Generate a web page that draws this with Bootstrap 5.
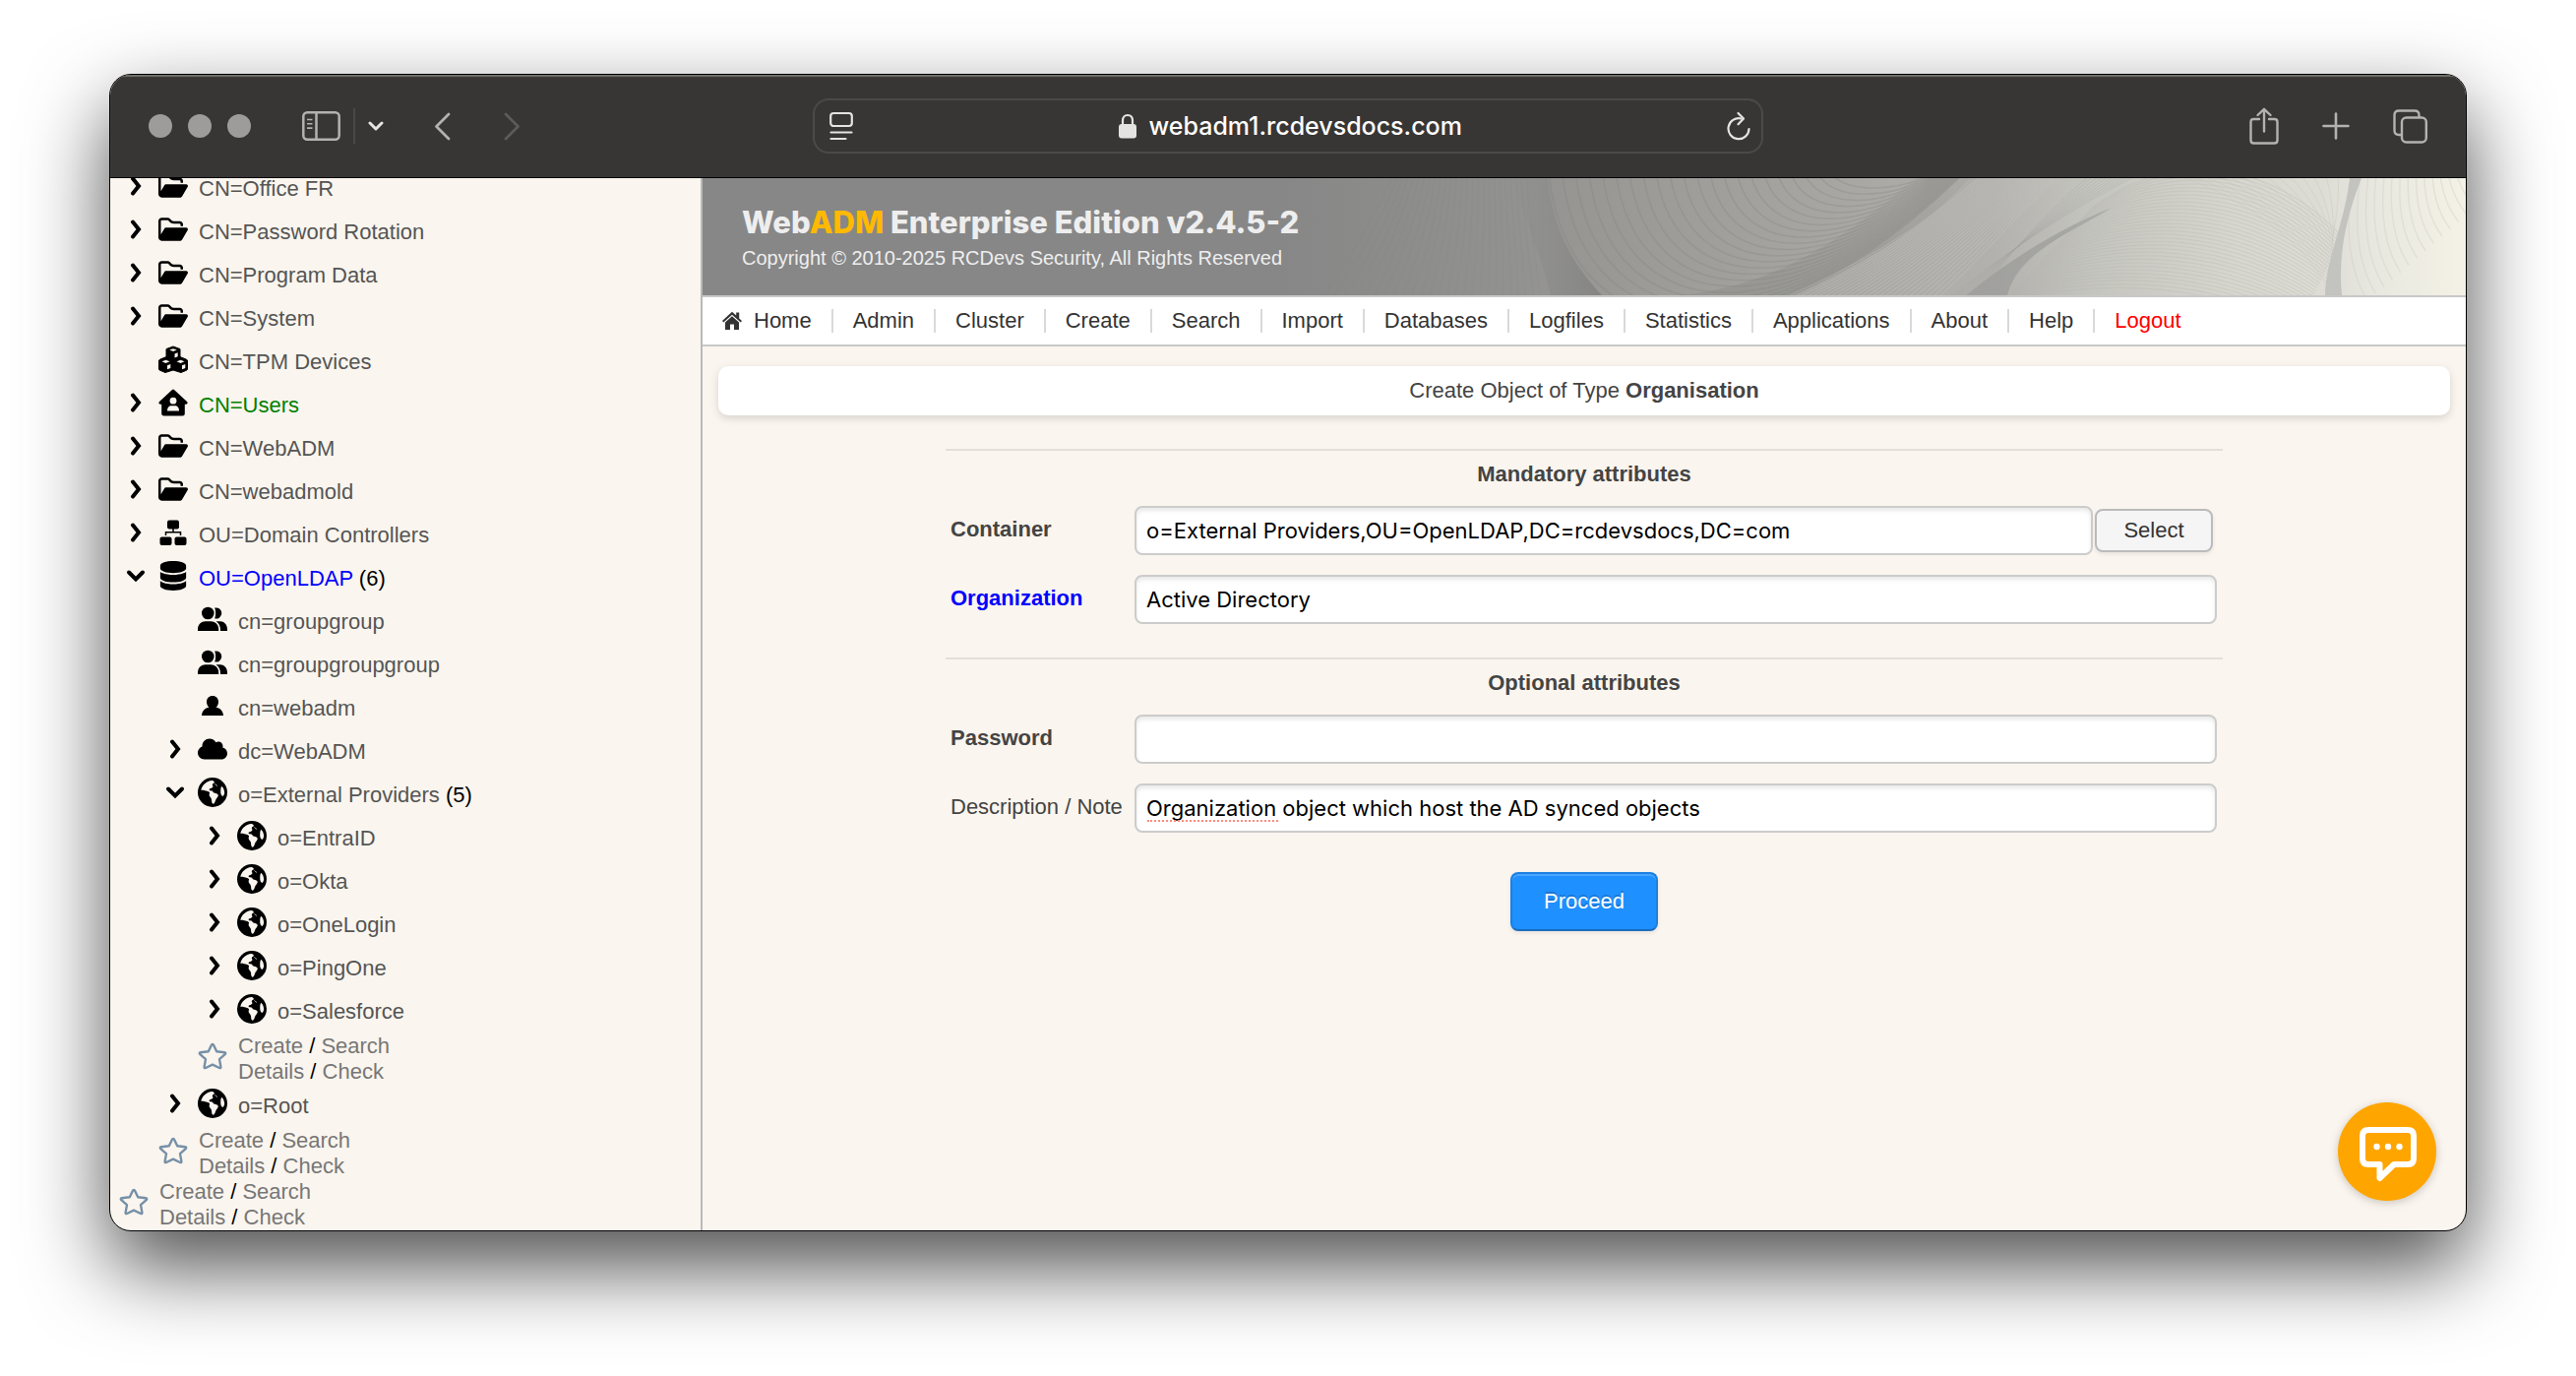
<!DOCTYPE html>
<html lang="en">
<head>
<meta charset="utf-8">
<meta name="viewport" content="width=device-width, initial-scale=1">
<title>WebADM Enterprise Edition</title>
<link href="https://cdn.jsdelivr.net/npm/bootstrap@5.3.0/dist/css/bootstrap.min.css" rel="stylesheet">
<style>
  body { font-family: "Liberation Sans", Arial, sans-serif; font-size: 22px; line-height: 26px; color: #444; background: #fff; padding: 75px 111px 147px; min-height: 100vh; }
  a { color: inherit; text-decoration: none; }
  svg { display: block; flex: none; }
  .plain-btn { background: none; border: 0; padding: 0; color: inherit; line-height: 0; }

  .browser { border: 1px solid #000; border-radius: 22px; overflow: hidden; background: #faf5ee; box-shadow: 0 36px 84px rgba(0,0,0,.7); min-height: calc(100vh - 222px); position: relative; }
  .toolbar { height: 105px; background: #383634; border-bottom: 1px solid #000; color: #b4b2b0; padding: 0 39px; box-shadow: inset 0 2px 1px #72716c; }
  .side-l, .side-r { flex: 1 1 0; }
  .light { width: 24px; height: 24px; border-radius: 50%; background: #9d9c9a; }
  .tb-rule { width: 2px; height: 36px; background: #4b4947; margin: 0 13px; }
  .addr { flex: 0 1 966px; height: 56px; border: 2px solid #4c4a48; border-radius: 16px; padding: 0 11px 0 15px; color: #e4e3e2; }
  .addr-in { width: 318px; background: none; border: 0; padding: 0; color: #fff; font: 500 25px/32px Inter, sans-serif; }
  .addr-lock { gap: 13px; }
  .tool-sidebar { margin-left: 52px; }
  .tool-back, .tool-fwd { margin-left: 51px; }
  .tool-fwd { margin-left: 54px; }
  .side-r { gap: 44px; }

  .sidebar { width: 602px; flex: none; border-right: 2px solid #b9b9bb; overflow: hidden; }
  .tree { margin: -12px 0 0; padding: 0 0 0 9px; color: #000; }
  .tree li { height: 44px; }
  .tree a { color: #555; }
  .tree .star-row { height: 52px; }
  .tree .star-row a { color: #777; }
  .tree .lv1 { padding-left: 40px; }
  .tree .lv2 { padding-left: 80px; }
  .tree .user-home { color: green; }
  .tree .active-ou { color: #00f; }
  .twist { width: 34px; height: 26px; margin: 0 6px 4px 0; display: flex; align-items: center; justify-content: center; }
  .node-ico { width: 30px; height: 30px; margin: 0 10px 4px 0; }
  .tree .node-text { padding: 2px 0 0 1px; }

  .banner { height: 119px; position: relative; background: #878787; color: #eee; padding: 27px 40px 0; overflow: hidden; }
  .banner h1 { font: 800 31px/36px Inter, sans-serif; margin: 0 0 4px; color: #eee; position: relative; }
  .banner h1 span { color: #ffb900; }
  .banner p { font-size: 20px; line-height: 28px; margin: 0; position: relative; }
  .waves { position: absolute; right: 0; top: 0; }
  .menu { border-top: 2px solid #c8c8c8; border-bottom: 2px solid #c8c8c8; background: #fff; height: 52px; }
  .menu a { padding: 0 20px; color: #333; height: 24px; line-height: 24px; border-right: 2px solid #d9d9d9; display: flex; align-items: center; gap: 12px; }
  .menu a.out { color: #f00; border: 0; }

  .page-title { background: #fff; border-radius: 10px; height: 50px; box-shadow: 0 3px 8px rgba(0,0,0,.14); margin: 20px 16px 0; font-size: 22px; line-height: 50px; color: #444; text-align: center; font-weight: 400; }
  .obj-form { width: 1298px; max-width: 100%; }
  .obj-form hr { border: 0; height: 2px; background: #e3dfda; opacity: 1; margin: 34px 0 0; }
  .obj-form legend { float: none; font-size: 22px; line-height: 48px; font-weight: 700; text-align: center; margin: 0 0 8px; padding: 0; }
  .obj-rows { gap: 20px; padding: 0 6px 0 5px; }
  .obj-row label { width: 187px; flex: none; font-weight: 700; margin-bottom: 2px; }
  .obj-row .req { color: #00f; }
  .obj-row .opt { font-weight: 400; }
  .obj-row .form-control { height: 50px; min-width: 0; border: 2px solid #ccc; border-radius: 8px; padding: 0 10px; color: #000; font: 400 22px/26px Inter, sans-serif; box-shadow: inset 0 3px 4px rgba(0,0,0,.09); background: #fff; }
  .pick { width: 120px; height: 44px; margin: 0 4px 0 2px; border: 2px solid #bbb; border-radius: 8px; background: #f5f5f5; color: #333; font-size: 22px; line-height: 26px; padding: 0; flex: none; box-shadow: 0 2px 4px rgba(0,0,0,.08); }
  .go { width: 150px; height: 60px; margin-top: 40px; border: 2px solid #1c80e3; border-bottom-color: #1b6dc0; border-radius: 8px; background: #1e90ff; color: #fff; font-size: 22px; line-height: 26px; padding: 0; box-shadow: inset 0 2px 0 #4ba6ff, 0 2px 4px rgba(0,0,0,.08); text-shadow: 0 -2px 0 rgba(0,0,0,.2); }
  .misspelt { position: absolute; left: 13px; bottom: 11px; width: 133px; border-bottom: 2px dotted #ff8a80; }
  .chat { position: absolute; right: 30px; bottom: 30px; width: 100px; height: 100px; border-radius: 50%; background: #ffa500; box-shadow: 0 2px 10px rgba(0,0,0,.2); }
</style>
<script src="https://cdn.jsdelivr.net/npm/bootstrap@5.3.0/dist/js/bootstrap.bundle.min.js"></script>
</head>
<body>
<svg width="0" height="0" class="position-absolute" aria-hidden="true">
  <symbol id="i-right" viewBox="0 0 20 20"><path d="M7 2.5l6 7.5-6 7.500" fill="none" stroke="#000" stroke-width="4" stroke-linecap="round" stroke-linejoin="miter"/></symbol>
  <symbol id="i-down" viewBox="0 0 20 20"><path d="M3 6.500l7 7 7-7" fill="none" stroke="#000" stroke-width="4" stroke-linecap="round"/></symbol>
  <symbol id="i-folder" viewBox="0 0 576 512"><path d="M384 480h48c11.400 0 21.900-6 27.600-15.900l112-192c5.800-9.900 5.800-22.100 .1-32.100S555.500 224 544 224H144c-11.400 0-21.900 6-27.600 15.900L48 357.100V96c0-8.800 7.200-16 16-16H181.500c4.200 0 8.300 1.700 11.300 4.700l26.500 26.500c21 21 49.500 32.800 79.200 32.800H416c8.800 0 16 7.200 16 16v32h48V160c0-35.300-28.700-64-64-64H298.500c-17 0-33.300-6.700-45.300-18.700L226.700 50.700c-12-12-28.300-18.700-45.300-18.700H64C28.700 32 0 60.700 0 96V416c0 35.300 28.700 64 64 64H384z"/></symbol>
  <symbol id="i-cubes" viewBox="0 0 30 30"><path d="M15 2l7 2.600v8l6 2.400q2 .8 2 2.500v6.500q0 1.500-1.500 2.200L23 28.500 15 26l-8 2.500-5.500-2.300Q0 25.500 0 24v-6.500Q0 15.800 2 15l6-2.400v-8z" stroke="#000" stroke-linejoin="round"/><g fill="#faf5ee"><path d="M11.200 5.600L15 4.300l3.800 1.300L15 7z"/><path d="M16.500 9.500l3.200-1.200v4l-3.200 1.300z"/><path d="M3.500 17.300l4-1.500 4 1.500-4 1.600z"/><path d="M9 21.200l3.300-1.300v4L9 25.300z"/><path d="M18.500 17.300l4-1.500 4 1.500-4 1.600z"/><path d="M24 21.200l3.300-1.300v4L24 25.300z"/></g></symbol>
  <symbol id="i-house" viewBox="0 0 30 30"><path d="M15 1.600a1.500 1.500 0 0 1 1 .4l13 12c1.200 1.200.6 2.800-1 2.800h-1.200V26a2.500 2.500 0 0 1-2.500 2.500H5.700A2.500 2.500 0 0 1 3.200 26v-9.200H2c-1.600 0-2.200-1.600-1-2.800L14 2a1.500 1.500 0 0 1 1-.4z"/><circle cx="15" cy="13.200" r="3.400" fill="#faf5ee"/><path d="M9 23.500c0-3.600 2-5.200 4-5.200h4c2 0 4 1.600 4 5.200z" fill="#faf5ee"/></symbol>
  <symbol id="i-map" viewBox="0 0 30 30"><rect x="9" y="2.500" width="12" height="9" rx="2"/><rect x="1.500" y="19.500" width="12" height="8.500" rx="2"/><rect x="16.500" y="19.500" width="12" height="8.500" rx="2"/><path d="M15 11v3.500M7.500 18v-3.200h15V18" fill="none" stroke="#000" stroke-width="1.500"/></symbol>
  <symbol id="i-db" viewBox="0 0 448 512"><path d="M448 80v48c0 44.200-100.300 80-224 80S0 172.200 0 128V80C0 35.800 100.300 0 224 0S448 35.800 448 80zM393.200 214.700c20.800-7.400 39.900-16.900 54.800-28.600V288c0 44.200-100.300 80-224 80S0 332.200 0 288V186.100c14.900 11.800 34 21.200 54.800 28.600C99.700 230.700 159.500 240 224 240s124.300-9.300 169.200-25.300zM0 346.100c14.900 11.800 34 21.200 54.800 28.600C99.700 390.700 159.500 400 224 400s124.300-9.300 169.200-25.300c20.800-7.400 39.900-16.900 54.800-28.600V432c0 44.200-100.300 80-224 80S0 476.200 0 432V346.100z"/></symbol>
  <symbol id="i-group" viewBox="0 0 30 30"><circle cx="10.300" cy="9" r="6.300"/><path d="M0 27v-1.500C0 20 4 17.300 7.500 17.300h6c3.500 0 7.700 2.700 7.700 8.200V27z"/><path d="M17.200 3.600a5.600 5.600 0 1 1 0 10.800c1.300-3.500 1.300-7.300 0-10.800z"/><path d="M18.500 17.300H23c3.500 0 7 3 7 8.200V27h-7c.3-4-1.300-7.800-4.500-9.700z"/></symbol>
  <symbol id="i-user" viewBox="0 0 30 30"><path d="M15 5c3.600 0 6 2.600 6 6 0 2.400-1 4.500-2.500 5.700 4 .6 7.300 3.300 7.500 8.300H4c.2-5 3.500-7.700 7.500-8.300C10 15.500 9 13.400 9 11c0-3.400 2.400-6 6-6z"/></symbol>
  <symbol id="i-cloud" viewBox="0 0 640 512"><path d="M0 336c0 79.500 64.500 144 144 144H512c70.700 0 128-57.300 128-128c0-61.900-44-113.600-102.400-125.400c4.100-10.700 6.400-22.400 6.400-34.600c0-53-43-96-96-96c-19.700 0-38.100 6-53.300 16.200C367 64.200 315.300 32 256 32C167.600 32 96 103.600 96 192c0 2.700 .1 5.400 .2 8.100C40.200 219.800 0 273.200 0 336z"/></symbol>
  <symbol id="i-globe" viewBox="0 0 30 30"><circle cx="15" cy="15" r="15"/><g fill="#faf5ee"><path d="M3.300 12.800C4.300 7.600 8.800 3.400 14.500 2.900c1.500.4 2.600 1.200 2.300 2.200-.4 1-1.900 1.200-2 2.300.1.900 1 1.200.6 2.200-.6 1.300-2.600 1-3.600 2.200-.7.900.4 1.700 1.500 1.600 1.400-.2 1.800.7 2.500 1.700.7.700 2.200.6 3.700 1.300 1.300.6 1.600 1.700.9 2.900-1 1.700-1.900 2.500-2.500 4.100-.5 1.600-1.200 3.300-2.500 3.300-1.100-.5-1.200-2.200-1.300-3.700-.1-1.700-.8-2.600-1.700-3.600-1-1.200-.9-2.100-.4-3.400.3-1-.7-1.600-1.900-2-2.300-.7-4.600-1.600-7.200-1.200z"/><path d="M24.200 8.700c1.800 1.300 2.900 4 2.900 6.600-.1 1.700-.7 3.100-1.600 3.600-1.400-.4-2.100-1.900-2.200-3.700-.1-1.900-.2-4.600.9-6.500z"/></g><path d="M17.500 6.500c1.200.5 1 1.500 2.300 1.900" stroke="#faf5ee" stroke-width=".8" fill="none"/></symbol>
  <symbol id="i-star" viewBox="0 0 30 30"><path d="M15 3q.8 0 1.200.9l3 6.400 7.900.9q1.900.4.6 1.900l-5.700 5 1.400 7.800q.2 1.700-1.400 1.100L15 23.600 8 27q-1.600.6-1.400-1.100L8 18.100l-5.700-5q-1.300-1.500.6-1.900l7.900-.9 3-6.400Q14.200 3 15 3z" fill="none" stroke="#7690a8" stroke-width="2.400" stroke-linejoin="round"/></symbol>
</svg>

<div class="browser d-flex flex-column">
  <header class="toolbar d-flex align-items-center">
    <div class="side-l d-flex align-items-center">
      <div class="d-flex gap-3"><span class="light"></span><span class="light"></span><span class="light"></span></div>
      <button class="plain-btn tool-sidebar" aria-label="Sidebar"><svg width="39" height="30" fill="none" stroke="currentColor" stroke-width="2.500"><rect x="1.300" y="1.300" width="36.400" height="27.400" rx="4"/><path d="M14.500 1v28"/><path d="M5 8.500h5.500M5 12.800h5.500M5 17.100h5.500" stroke-width="1.600"/></svg></button>
      <span class="tb-rule"></span>
      <button class="plain-btn" aria-label="Tab groups"><svg width="16" height="12" fill="none" stroke="#e6e5e4" stroke-width="3" stroke-linecap="round" stroke-linejoin="round"><path d="M2 3l6 6 6-6"/></svg></button>
      <button class="plain-btn tool-back" aria-label="Back"><svg width="17" height="29" fill="none" stroke="currentColor" stroke-width="2.800" stroke-linecap="round" stroke-linejoin="round"><path d="M15 2L2.500 14.500 15 27"/></svg></button>
      <button class="plain-btn tool-fwd" aria-label="Forward"><svg width="17" height="29" fill="none" stroke="#5d5b59" stroke-width="2.800" stroke-linecap="round" stroke-linejoin="round"><path d="M2 2l12.500 12.500L2 27"/></svg></button>
    </div>
    <div class="addr d-flex align-items-center justify-content-between">
      <button class="plain-btn" aria-label="Page menu"><svg width="24" height="30" fill="none" stroke="currentColor" stroke-width="2.200" stroke-linecap="round"><rect x="1.200" y="2" width="21.600" height="13" rx="3"/><path d="M1.500 21.500h21M1.500 28h15"/></svg></button>
      <div class="addr-lock d-flex align-items-center">
        <svg width="18" height="26"><path d="M4 12V7.500C4 4 6 2 9 2s5 2 5 5.500V12" fill="none" stroke="currentColor" stroke-width="2.200"/><rect y="11" width="18" height="14.500" rx="3" fill="currentColor"/></svg>
        <input class="addr-in" type="text" value="webadm1.rcdevsdocs.com" aria-label="Address">
      </div>
      <button class="plain-btn" aria-label="Reload"><svg width="24" height="30" fill="none" stroke="currentColor" stroke-width="2.200" stroke-linecap="round" stroke-linejoin="round"><path d="M14.500 7.500A10.500 10.500 0 1 0 22.500 18"/><path d="M11.500 2l5.500 5.500-5.500 5.800"/></svg></button>
    </div>
    <div class="side-r d-flex align-items-center justify-content-end">
      <button class="plain-btn" aria-label="Share"><svg width="30" height="38" fill="none" stroke="currentColor" stroke-width="2.400" stroke-linecap="round" stroke-linejoin="round"><path d="M10 12H4.500Q1.500 12 1.500 15v18.500q0 3 3 3h21q3 0 3-3V15q0-3-3-3H20M15 24.500V2M8.500 8L15 1.800 21.500 8"/></svg></button>
      <button class="plain-btn" aria-label="New tab"><svg width="28" height="28" stroke="currentColor" stroke-width="2.600" stroke-linecap="round"><path d="M14 1.500v25M1.500 14h25"/></svg></button>
      <button class="plain-btn" aria-label="Tabs"><svg width="35" height="35" fill="none" stroke="currentColor" stroke-width="2.400"><rect x="9" y="8.500" width="24.800" height="25" rx="4.500"/><path d="M8.500 26H6q-4.500 0-4.500-4.500V6Q1.500 1.500 6 1.500h16Q26.500 1.500 26.500 6v2"/></svg></button>
    </div>
  </header>

  <div class="d-flex flex-grow-1">
    <nav class="sidebar" aria-label="Directory tree">
      <ul class="tree list-unstyled">
        <li class="d-flex align-items-center"><button class="plain-btn twist" aria-label="Expand"><svg width="20" height="20"><use href="#i-right"/></svg></button><svg class="node-ico"><use href="#i-folder"/></svg><a class="node-text" href="#">CN=Office FR</a></li>
        <li class="d-flex align-items-center"><button class="plain-btn twist" aria-label="Expand"><svg width="20" height="20"><use href="#i-right"/></svg></button><svg class="node-ico"><use href="#i-folder"/></svg><a class="node-text" href="#">CN=Password Rotation</a></li>
        <li class="d-flex align-items-center"><button class="plain-btn twist" aria-label="Expand"><svg width="20" height="20"><use href="#i-right"/></svg></button><svg class="node-ico"><use href="#i-folder"/></svg><a class="node-text" href="#">CN=Program Data</a></li>
        <li class="d-flex align-items-center"><button class="plain-btn twist" aria-label="Expand"><svg width="20" height="20"><use href="#i-right"/></svg></button><svg class="node-ico"><use href="#i-folder"/></svg><a class="node-text" href="#">CN=System</a></li>
        <li class="d-flex align-items-center"><span class="twist"></span><svg class="node-ico"><use href="#i-cubes"/></svg><a class="node-text" href="#">CN=TPM Devices</a></li>
        <li class="d-flex align-items-center"><button class="plain-btn twist" aria-label="Expand"><svg width="20" height="20"><use href="#i-right"/></svg></button><svg class="node-ico"><use href="#i-house"/></svg><a class="node-text user-home" href="#">CN=Users</a></li>
        <li class="d-flex align-items-center"><button class="plain-btn twist" aria-label="Expand"><svg width="20" height="20"><use href="#i-right"/></svg></button><svg class="node-ico"><use href="#i-folder"/></svg><a class="node-text" href="#">CN=WebADM</a></li>
        <li class="d-flex align-items-center"><button class="plain-btn twist" aria-label="Expand"><svg width="20" height="20"><use href="#i-right"/></svg></button><svg class="node-ico"><use href="#i-folder"/></svg><a class="node-text" href="#">CN=webadmold</a></li>
        <li class="d-flex align-items-center"><button class="plain-btn twist" aria-label="Expand"><svg width="20" height="20"><use href="#i-right"/></svg></button><svg class="node-ico"><use href="#i-map"/></svg><a class="node-text" href="#">OU=Domain Controllers</a></li>
        <li class="d-flex align-items-center"><button class="plain-btn twist" aria-label="Collapse"><svg width="20" height="20"><use href="#i-down"/></svg></button><svg class="node-ico"><use href="#i-db"/></svg><span class="node-text"><a class="active-ou" href="#">OU=OpenLDAP</a> (6)</span></li>
        <li class="d-flex align-items-center lv1"><span class="twist"></span><svg class="node-ico"><use href="#i-group"/></svg><a class="node-text" href="#">cn=groupgroup</a></li>
        <li class="d-flex align-items-center lv1"><span class="twist"></span><svg class="node-ico"><use href="#i-group"/></svg><a class="node-text" href="#">cn=groupgroupgroup</a></li>
        <li class="d-flex align-items-center lv1"><span class="twist"></span><svg class="node-ico"><use href="#i-user"/></svg><a class="node-text" href="#">cn=webadm</a></li>
        <li class="d-flex align-items-center lv1"><button class="plain-btn twist" aria-label="Expand"><svg width="20" height="20"><use href="#i-right"/></svg></button><svg class="node-ico"><use href="#i-cloud"/></svg><a class="node-text" href="#">dc=WebADM</a></li>
        <li class="d-flex align-items-center lv1"><button class="plain-btn twist" aria-label="Collapse"><svg width="20" height="20"><use href="#i-down"/></svg></button><svg class="node-ico"><use href="#i-globe"/></svg><span class="node-text"><a href="#">o=External Providers</a> (5)</span></li>
        <li class="d-flex align-items-center lv2"><button class="plain-btn twist" aria-label="Expand"><svg width="20" height="20"><use href="#i-right"/></svg></button><svg class="node-ico"><use href="#i-globe"/></svg><a class="node-text" href="#">o=EntraID</a></li>
        <li class="d-flex align-items-center lv2"><button class="plain-btn twist" aria-label="Expand"><svg width="20" height="20"><use href="#i-right"/></svg></button><svg class="node-ico"><use href="#i-globe"/></svg><a class="node-text" href="#">o=Okta</a></li>
        <li class="d-flex align-items-center lv2"><button class="plain-btn twist" aria-label="Expand"><svg width="20" height="20"><use href="#i-right"/></svg></button><svg class="node-ico"><use href="#i-globe"/></svg><a class="node-text" href="#">o=OneLogin</a></li>
        <li class="d-flex align-items-center lv2"><button class="plain-btn twist" aria-label="Expand"><svg width="20" height="20"><use href="#i-right"/></svg></button><svg class="node-ico"><use href="#i-globe"/></svg><a class="node-text" href="#">o=PingOne</a></li>
        <li class="d-flex align-items-center lv2"><button class="plain-btn twist" aria-label="Expand"><svg width="20" height="20"><use href="#i-right"/></svg></button><svg class="node-ico"><use href="#i-globe"/></svg><a class="node-text" href="#">o=Salesforce</a></li>
        <li class="star-row d-flex align-items-center lv2"><svg class="node-ico"><use href="#i-star"/></svg><span class="node-text"><a href="#">Create</a> / <a href="#">Search</a><br><a href="#">Details</a> / <a href="#">Check</a></span></li>
        <li class="d-flex align-items-center lv1"><button class="plain-btn twist" aria-label="Expand"><svg width="20" height="20"><use href="#i-right"/></svg></button><svg class="node-ico"><use href="#i-globe"/></svg><a class="node-text" href="#">o=Root</a></li>
        <li class="star-row d-flex align-items-center lv1"><svg class="node-ico"><use href="#i-star"/></svg><span class="node-text"><a href="#">Create</a> / <a href="#">Search</a><br><a href="#">Details</a> / <a href="#">Check</a></span></li>
        <li class="star-row d-flex align-items-center"><svg class="node-ico"><use href="#i-star"/></svg><span class="node-text"><a href="#">Create</a> / <a href="#">Search</a><br><a href="#">Details</a> / <a href="#">Check</a></span></li>
      </ul>
    </nav>

    <main class="flex-grow-1">
      <div class="banner">
        <svg class="waves" id="waves" width="1200" height="119" viewBox="-100 0 1200 119" fill="none" aria-hidden="true">
          <defs>
            <linearGradient id="g-base" x1="0" x2="1">
              <stop offset="0" stop-color="#878787"/><stop offset=".2" stop-color="#929290"/><stop offset=".27" stop-color="#999895"/><stop offset=".48" stop-color="#a8a7a3"/><stop offset=".6" stop-color="#b2b1ad"/><stop offset=".68" stop-color="#c4c4be"/><stop offset=".8" stop-color="#d6d6cf"/><stop offset=".88" stop-color="#dddcd5"/><stop offset=".92" stop-color="#e8e7df"/><stop offset="1" stop-color="#f4f2e6"/>
            </linearGradient>
            <linearGradient id="g-fold" x1="0" x2="1"><stop offset="0" stop-color="#858584" stop-opacity="0"/><stop offset="1" stop-color="#828281" stop-opacity=".9"/></linearGradient>
            <linearGradient id="g-band" x1="0" y1="0" x2=".3" y2="1"><stop offset="0" stop-color="#8e8e8c" stop-opacity="0"/><stop offset="1" stop-color="#8b8b89" stop-opacity=".5"/></linearGradient>
          </defs>
          <rect x="-100" width="1200" height="119" fill="url(#g-base)"/>
          <path d="M130 0H167C172 50 190 85 222 119H170C160 80 145 40 130 0z" fill="url(#g-fold)"/>
          <path d="M300 119C400 110 470 60 540 0H596C540 60 480 90 420 119z" fill="url(#g-band)"/>
          <path d="M592 119C640 80 690 50 740 30C700 55 645 75 634 119z" fill="#989896" opacity=".65"/>
        </svg>
        <h1>Web<span>ADM</span> Enterprise Edition v2.4.5-2</h1>
        <p>Copyright © 2010-2025 RCDevs Security, All Rights Reserved</p>
      </div>
      <nav class="menu d-flex align-items-center" aria-label="Main">
        <a href="#"><svg width="20" height="20" viewBox="0 0 20 20" fill="#333"><path d="M10 .8L0 10l1.300 1.500L10 3.700l8.700 7.800L20 10l-2.800-2.600V1.500h-3V4.600z"/><path d="M10 5.200l-7 6.300V19h5v-5.500h4V19h5v-7.500z"/></svg>Home</a>
        <a href="#">Admin</a><a href="#">Cluster</a><a href="#">Create</a><a href="#">Search</a><a href="#">Import</a><a href="#">Databases</a><a href="#">Logfiles</a><a href="#">Statistics</a><a href="#">Applications</a><a href="#">About</a><a href="#">Help</a><a class="out" href="#">Logout</a>
      </nav>
      <h2 class="page-title">Create Object of Type <b>Organisation</b></h2>
      <form class="obj-form mx-auto" onsubmit="return false">
        <hr>
        <fieldset>
          <legend>Mandatory attributes</legend>
          <div class="obj-rows d-flex flex-column">
            <div class="obj-row d-flex align-items-center"><label for="f-cont">Container</label><input class="form-control" id="f-cont" type="text" value="o=External Providers,OU=OpenLDAP,DC=rcdevsdocs,DC=com"><button class="pick btn" type="button">Select</button></div>
            <div class="obj-row d-flex align-items-center"><label class="req" for="f-org">Organization</label><input class="form-control" id="f-org" type="text" value="Active Directory"></div>
          </div>
        </fieldset>
        <hr>
        <fieldset>
          <legend>Optional attributes</legend>
          <div class="obj-rows d-flex flex-column">
            <div class="obj-row d-flex align-items-center"><label for="f-pw">Password</label><input class="form-control" id="f-pw" type="password"></div>
            <div class="obj-row d-flex align-items-center"><label class="opt" for="f-note">Description / Note</label><div class="position-relative flex-grow-1"><input class="form-control" id="f-note" type="text" spellcheck="false" value="Organization object which host the AD synced objects"><span class="misspelt"></span></div></div>
          </div>
        </fieldset>
        <div class="text-center"><button class="go btn" type="submit">Proceed</button></div>
      </form>
    </main>
  </div>
  <button class="chat plain-btn" aria-label="Chat"><svg width="100" height="100" fill="none" stroke="#fff" stroke-width="6" stroke-linejoin="round"><path d="M31 28H71Q77 28 77 34V57Q77 63 71 63H57L42.500 77V63H31Q25 63 25 57V34Q25 28 31 28z"/><g fill="#fff" stroke="none"><circle cx="39.500" cy="45" r="3.200"/><circle cx="51" cy="45" r="3.200"/><circle cx="62.500" cy="45" r="3.200"/></g></svg></button>
</div>

<script>
  // Line families of the banner: each blends one cubic curve into another.
  const waves = document.getElementById('waves');
  function family(a, b, count, colour, width, opacity) {
    for (let i = 0; i < count; i++) {
      const t = i / (count - 1);
      const p = a.map((v, k) => (v + (b[k] - v) * t).toFixed(1));
      const el = document.createElementNS('http://www.w3.org/2000/svg', 'path');
      el.setAttribute('d', `M${p[0]} ${p[1]}C${p[2]} ${p[3]} ${p[4]} ${p[5]} ${p[6]} ${p[7]}`);
      el.setAttribute('stroke', colour);
      el.setAttribute('stroke-width', width);
      el.setAttribute('opacity', opacity);
      waves.appendChild(el);
    }
  }
  family([-60,119, -20,60, 0,20, 10,-5], [165,180, 160,110, 150,60, 145,-5], 26, '#7e7e7d', 1, .15);
  family([168,-5, 190,190, 390,190, 590,-5], [455,-5, 470,15, 520,15, 560,-5], 22, '#80807e', 1.6, .28);
  family([400,125, 480,90, 550,50, 610,-5], [560,125, 610,80, 640,40, 690,-5], 26, '#c8c8c3', 1.2, .35);
  family([570,125, 640,70, 700,30, 770,-5], [600,125, 640,70, 680,30, 720,-5], 10, '#a3a3a0', 1, .3);
  family([720,30, 800,-30, 900,-20, 975,60], [630,125, 740,100, 840,110, 930,150], 34, '#b3b3ae', 1.2, .28);
  family([800,-5, 880,20, 940,70, 965,119], [970,-5, 972,20, 968,40, 965,60], 14, '#c2c2bb', 1, .35);
  family([985,-5, 975,60, 985,100, 1000,125], [1090,-5, 1095,10, 1100,20, 1110,30], 14, '#cfcec4', 1.400, .4);
  const fold = document.createElementNS('http://www.w3.org/2000/svg', 'path');
  fold.setAttribute('d', 'M982 0C976 50 958 80 957 119H974C970 80 978 40 994 0z');
  fold.setAttribute('fill', '#c3c3bf');
  waves.appendChild(fold);
</script>
</body>
</html>
